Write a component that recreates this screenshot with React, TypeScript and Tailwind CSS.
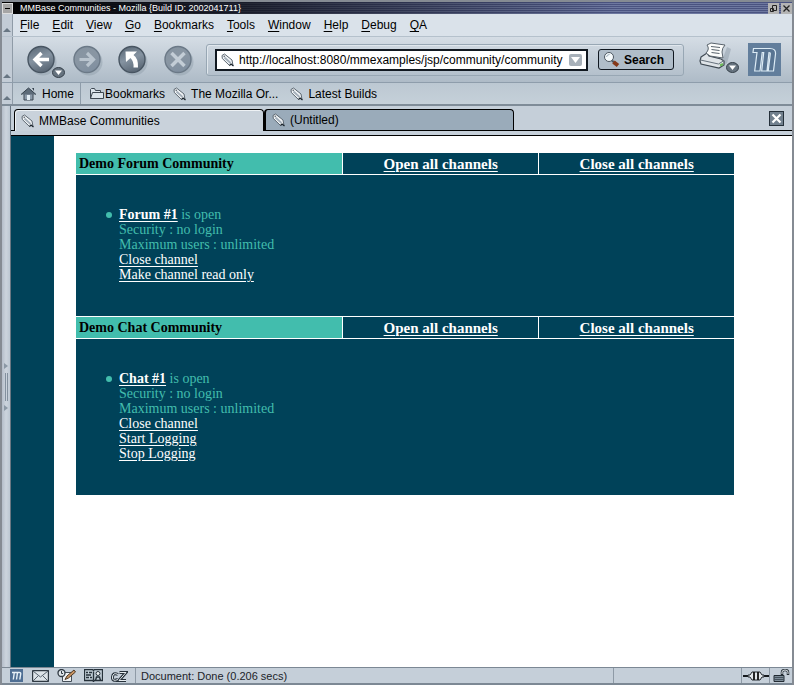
import React from "react";

type IconProps = { className?: string };

const Bookmark = ({ className = "" }: IconProps) => (
  <svg className={"shrink-0 " + className} width="14" height="14" viewBox="0 0 14 14">
    <path d="M1 2.500 3.500 1 11 7l1 5.500-2-1.500-1.500 1.500L1.300 5.500Z" fill="#f2f5f7" stroke="#5b6670" />
    <path d="M3.500 4.500 9.500 10" stroke="#a3aeb9" strokeWidth="1.8" />
    <path d="m8.500 12.500 1.500-1.500 2.500 2" stroke="#1d262e" strokeWidth="1.2" fill="none" />
    <circle cx="3.200" cy="3.300" r=".7" fill="#38424c" />
  </svg>
);

const Chevron = ({ className = "" }: IconProps) => (
  <svg className={className} width="13" height="11" viewBox="0 0 13 11">
    <ellipse cx="6.500" cy="5.500" rx="6" ry="5" fill="#66737f" stroke="#343e48" />
    <path d="M3 3.500h7L6.500 8Z" fill="#fff" />
  </svg>
);

function RoundButton({ label, dim, children }: { label: string; dim?: boolean; children: React.ReactNode }) {
  return (
    <button aria-label={label} className="h-8 w-8 shrink-0">
      <svg width="32" height="32" viewBox="0 0 32 32">
        <defs>
          <linearGradient id={"ball-" + label} x1="0" y1="0" x2="0.4" y2="1">
            <stop offset="0" stopColor={dim ? "#8593a0" : "#566472"} />
            <stop offset="0.55" stopColor={dim ? "#8996a3" : "#8593a1"} />
            <stop offset="1" stopColor={dim ? "#8190a0" : "#5e6b79"} />
          </linearGradient>
        </defs>
        <circle cx="18" cy="18" r="13.500" fill="#8a98a5" opacity=".4" />
        <circle cx="16" cy="15.500" r="13" fill={"url(#ball-" + label + ")"} stroke={dim ? "#6b7987" : "#485562"} strokeWidth="1.4" />
        {children}
      </svg>
    </button>
  );
}

const Gripper = () => (
  <div className="flex w-[11px] shrink-0 items-end justify-center border-r border-[#8f9ba7] bg-[#c3ccd6] pb-1">
    <svg width="8" height="4" viewBox="0 0 8 4">
      <path d="M4 0 8 4H0Z" fill="#687683" />
    </svg>
  </div>
);

function MozillaM() {
  return (
    <svg width="33" height="33" viewBox="0 0 33 33">
      <rect width="33" height="33" fill="#627e9c" />
      <path
        d="M5.500 5.500H22q6 0 5.500 5.500l-2 17h-5.300l2.100-17q.2-1.500-1.300-1.500L19 28h-5.300l2-18.500h-1.500L12 28H6.700L9 9.500H5Z"
        fill="#587492"
        stroke="#dcebf5"
        strokeWidth="1.2"
      />
    </svg>
  );
}

const menus = ["File", "Edit", "View", "Go", "Bookmarks", "Tools", "Window", "Help", "Debug", "QA"];

function TitleBar() {
  return (
    <header className="flex h-[14px] items-center border-t-2 border-[#858b93] bg-[repeating-linear-gradient(to_bottom,#4a5380_0,#4a5380_1px,#6d78a0_1px,#6d78a0_2px)]">
      <div className="flex h-full flex-1 items-center bg-linear-to-r from-black via-black/70 via-30% to-transparent to-80%">
        <button aria-label="Window menu" className="flex h-[11px] w-[11px] items-center justify-center border border-[#ddd] bg-[#a6a6a6]">
          <span className="h-px w-[5px] bg-black" />
        </button>
        <h1 className="ml-[7px] text-[9px] leading-3 whitespace-nowrap text-white">
          MMBase Communities - Mozilla {"{"}Build ID: 2002041711{"}"}
        </h1>
      </div>
      <button aria-label="Restore" className="mr-[2px] h-[11px] w-[11px] bg-[#b4b4b4]">
        <svg width="11" height="11" viewBox="0 0 11 11" fill="none" stroke="#222"><path d="M4.500 2.500h4v5h-4zM2.500 5.500h3v3h-3z" /></svg>
      </button>
      <button aria-label="Close window" className="h-[11px] w-[11px] bg-[#b4b4b4]">
        <svg width="11" height="11" viewBox="0 0 11 11" stroke="#222" strokeWidth="1.3"><path d="m2.500 2.500 6 6m0-6-6 6" /></svg>
      </button>
    </header>
  );
}

function Toolbar() {
  return (
    <div className="flex h-[46px] border-b border-[#8e9dab] bg-linear-to-b from-[#d5dde5] to-[#aebbc7]">
      <Gripper />
      <div className="flex min-w-0 flex-1 items-center pr-[11px] pl-3">
        <div className="relative mr-[14px] flex">
          <RoundButton label="Back"><path d="M24 15.500H10.500m6-6.500-6.500 6.500 6.500 6.500" stroke="#fff" strokeWidth="3.400" fill="none" /></RoundButton>
          <button aria-label="Back history" className="absolute top-[23px] left-[27px]"><Chevron /></button>
        </div>
        <div className="mr-[13px] flex"><RoundButton label="Forward" dim><path d="M8.500 15.500H22m-6-6.500 6.500 6.500-6.500 6.500" stroke="#b9c4ce" strokeWidth="3.200" fill="none" /></RoundButton></div>
        <div className="mr-[14px] flex"><RoundButton label="Reload"><path d="M9.500 7.500H21L17.500 11q5 3.500 4.500 12.500h-4.500q.5-6-3-9.500L10 18Z" fill="#fff" /></RoundButton></div>
        <RoundButton label="Stop" dim><path d="m9.500 9 13 13m0-13-13 13" stroke="#c3cdd6" strokeWidth="3.500" /></RoundButton>
        <div className="ml-3 flex h-8 min-w-0 flex-1 items-center rounded-[3px] border border-[#98a7b4] pr-[9px] pl-2 shadow-[inset_1px_1px_0_#e0e7ed]">
          <div className="flex h-[22px] min-w-0 flex-1 items-center border-2 border-[#111820] bg-white px-1">
            <Bookmark className="mr-1" />
            <input aria-label="Location" className="min-w-0 flex-1 text-xs outline-none" defaultValue="http://localhost:8080/mmexamples/jsp/community/community" />
            <button aria-label="Location history" className="flex h-3 w-[13px] shrink-0 items-center justify-center rounded-[2px] bg-[#a7b0b9]">
              <svg width="9" height="6" viewBox="0 0 9 6"><path d="M0 0h9L4.500 6Z" fill="#fff" /></svg>
            </button>
          </div>
          <button className="ml-[10px] flex h-[21px] w-[76px] items-center rounded-[3px] border border-[#111820] bg-[#b0bdc9] pl-1 text-xs font-bold">
            <svg className="mr-1" width="17" height="17" viewBox="0 0 17 17">
              <path d="m9 9.500 2 2" stroke="#4b5660" strokeWidth="2" />
              <path d="m10.500 11 4.500 3.500" stroke="#853819" strokeWidth="4" />
              <circle cx="6" cy="6" r="4.500" fill="#f5fafc" stroke="#4b5660" />
              <path d="M3.500 6Q4 3.500 6.500 3.500" stroke="#9cacb9" fill="none" />
            </svg>
            Search
          </button>
        </div>
        <button aria-label="Print" className="relative ml-[15px] h-9 w-[42px] shrink-0">
          <svg width="42" height="36" viewBox="0 0 42 36">
            <path d="m8 21 15-2 5-14 4 2-4 14-7 4Z" fill="#8997a4" opacity=".45" />
            <path d="m2 15 6-4 2 3 12 3 3 2v4l-5 3-18-4-1-3Z" fill="#dfe4e8" stroke="#3f4952" strokeWidth="1.200" />
            <path d="m8 3 4-2 14 2q-3 3-3 7l1 6-13-2-4-3q4-4 1-8Z" fill="#fbfcfb" stroke="#59636c" />
            <path d="m12 4.500 9 1m-8.500 2 8 1m-8 2 8 1" stroke="#59636c" />
            <path d="m1.500 18 18 4 5.500-3.500" stroke="#67727d" fill="none" />
            <path d="m21 23.500 3-1.500" stroke="#69b856" strokeWidth="2" />
          </svg>
          <span className="absolute right-[2px] bottom-[5px]"><Chevron /></span>
        </button>
        <a href="#" aria-label="Mozilla" className="ml-[7px] shrink-0"><MozillaM /></a>
      </div>
    </div>
  );
}

function PersonalBar() {
  return (
    <nav aria-label="Personal toolbar" className="flex h-[23px] border-b-2 border-[#7f8c98] bg-linear-to-b from-[#bcc8d2] to-[#c5d0d9]">
      <Gripper />
      <div className="flex items-center pl-2">
        <a href="#" className="flex h-full items-center border-r border-[#8e9ca9] pr-[6px]">
          <svg className="mr-[6px]" width="15" height="14" viewBox="0 0 15 14">
            <path d="M3 7v6h9V7" fill="#8c9baa" stroke="#3c4752" />
            <path d="M0 7.500 7.500 1 15 7.500" fill="#5d6b79" stroke="#34404b" />
            <path d="M11 1h2v3" fill="#34404b" />
            <path d="M6 8h3v5H6Z" fill="#e3edf5" />
          </svg>
          Home
        </a>
        <a href="#" className="ml-2 flex items-center">
          <svg className="mr-px" width="15" height="13" viewBox="0 0 15 13">
            <path d="M1.500 11.500v-9l1-1h3l1 2h5v2m-10 6 2-6h11v6Z" fill="#dbe4eb" stroke="#3d4751" />
          </svg>
          Bookmarks
        </a>
        <a href="#" className="ml-2 flex items-center"><Bookmark className="mr-1" />The Mozilla Or...</a>
        <a href="#" className="ml-3 flex items-center"><Bookmark className="mr-1" />Latest Builds</a>
      </div>
    </nav>
  );
}

function CommunityHead({ name }: { name: string }) {
  return (
    <tr className="h-[22px] leading-5">
      <th className="w-[267px] border-r border-b border-white bg-[#42bdad] px-[3px] text-left text-black">{name}</th>
      <th className="border-r border-b border-white text-center text-[15px]"><a href="#" className="underline underline-offset-2">Open all channels</a></th>
      <th className="border-b border-white text-center text-[15px]"><a href="#" className="underline underline-offset-2">Close all channels</a></th>
    </tr>
  );
}

function Channel({ name, actions, divider }: { name: string; actions: string[]; divider?: boolean }) {
  return (
    <tr>
      <td colSpan={3} className={"pt-8 pb-[34px] pl-[30px] " + (divider ? "border-b border-white" : "")}>
        <div className="flex items-start text-[#42bdad]">
          <span className="mt-[5px] mr-[7px] h-[6px] w-[6px] rounded-full bg-[#42bdad]" />
          <ul className="leading-[15px]">
            <li><a href="#" className="font-bold text-white underline underline-offset-2">{name}</a> is open</li>
            <li>Security : no login</li>
            <li>Maximum users : unlimited</li>
            {actions.map((a) => (
              <li key={a}><a href="#" className="text-white underline underline-offset-2">{a}</a></li>
            ))}
          </ul>
        </div>
      </td>
    </tr>
  );
}

function StatusBar() {
  return (
    <footer className="flex h-[18px] items-center border-t border-b-2 border-t-[#7c8894] border-b-[#7c8894] bg-[#c5cfd9] text-[11px] text-[#1c2329]">
      <div className="flex h-full w-[134px] shrink-0 items-center border-r border-[#8e9aa6] pl-2">
        <button aria-label="Navigator" className="mr-[9px]">
          <svg width="13" height="13" viewBox="0 0 13 13"><rect width="13" height="13" fill="#4f6f94" /><path d="M2 3.500h7.500q1.500 0 1.200 1.500L9.800 10.500M4.300 3.500 3.300 10.500M7.500 3.500l-1 7" stroke="#e6f0f7" strokeWidth="1.400" fill="none" /></svg>
        </button>
        <button aria-label="Mail" className="mr-2">
          <svg width="17" height="12" viewBox="0 0 17 12"><rect x=".5" y=".5" width="16" height="11" rx="1" fill="#dce3e8" stroke="#2f3942" strokeWidth="1.400" /><path d="m1 1 7.500 6L16 1M1 11l5-5m10 5-5-5" stroke="#55616c" fill="none" /></svg>
        </button>
        <button aria-label="Composer" className="mr-2">
          <svg width="19" height="14" viewBox="0 0 19 14"><path d="M5.500 3.500h9v9h-9Z" fill="#eef1f3" stroke="#444e58" /><circle cx="4.500" cy="4" r="3.500" fill="#dfe6eb" stroke="#303942" strokeWidth="1.300" /><path d="M4.500 2v2.500H6" stroke="#303942" fill="none" /><path d="M8 10.500 10 7l7-6 1.500 2-7 6Z" fill="#c99462" stroke="#4f3a28" /></svg>
        </button>
        <button aria-label="Address book" className="mr-2">
          <svg width="19" height="13" viewBox="0 0 19 13"><path d="M.5.500h8l1 1 1-1h8v11h-8l-1 1-1-1h-8Z" fill="#c2ced7" stroke="#26313a" strokeWidth="1.300" /><path d="M2 3.500h2m1 0h3M2 6h5M2 8.500h3m1 0h2m1.500-6v9m2 0 1-3.500h3l1 3.500" stroke="#26313a" strokeWidth="1.400" fill="none" /><circle cx="14" cy="4.500" r="2" fill="#f0f4f6" stroke="#26313a" /></svg>
        </button>
        <button aria-label="ChatZilla" className="text-[#26313a]">
          <svg width="17" height="12" viewBox="0 0 17 12" fill="none" stroke="currentColor"><path d="M7 4.500Q2 2 1.500 7T7 9.500M8.500 2.500H15L8 10.500h7" strokeWidth="3" /><path d="M7 4.500Q2 2 1.500 7T7 9.500M8.500 2.500H15L8 10.500h7" stroke="#e5ebef" /></svg>
        </button>
      </div>
      <p className="h-full flex-1 border-r border-[#8e9aa6] pl-[5px] leading-[17px]">Document: Done (0.206 secs)</p>
      <div className="h-full w-32 border-r border-[#8e9aa6]" />
      <div className="flex h-full w-7 items-center justify-center border-r border-[#8e9aa6]">
        <svg width="26" height="10" viewBox="0 0 26 10"><path d="M0 5h7m12 0h7" stroke="#15191d" strokeWidth="2" /><path d="M5 4h2l2-3h8l2 3h2v2h-2l-2 3H9L7 6H5Z" fill="#e3e8ec" stroke="#22282e" /><path d="M11 1v8m4-8v8" stroke="#111" strokeWidth="1.800" /></svg>
      </div>
      <div className="flex h-full w-[22px] items-center justify-center">
        <svg width="17" height="13" viewBox="0 0 17 13"><path d="M1 6.500h10v6H1Z" fill="#7e8d99" stroke="#222b33" /><path d="M1 8.500h10m-10 2h10" stroke="#46525d" /><path d="M9 6V3q0-2 3-2t3 2v3" fill="none" stroke="#222b33" strokeWidth="2.500" /><path d="M9 5V3q0-2 3-2t3 2v2" fill="none" stroke="#e4e9ed" strokeWidth="1" /></svg>
      </div>
    </footer>
  );
}

export default function App() {
  return (
    <div className="flex min-h-screen flex-col border-r-2 border-l-2 border-[#858b93] bg-[#c5cfd9] font-['Liberation_Sans',Arial,sans-serif] text-xs text-black">
      <TitleBar />
      <div className="flex h-[23px] border-b border-[#b5c1cc] bg-[#dae2ea]">
        <Gripper />
        <nav aria-label="Menu bar" className="flex items-center gap-[13px] pl-[7px]">
          {menus.map((m) => (
            <button key={m}><span className="underline underline-offset-2">{m[0]}</span>{m.slice(1)}</button>
          ))}
        </nav>
      </div>
      <Toolbar />
      <PersonalBar />
      <div className="flex flex-1">
        <div className="flex w-[9px] shrink-0 flex-col items-center justify-center gap-1 border-r border-[#697682] bg-linear-to-r from-[#b4bdc9] via-[#ccd4dd] to-[#bcc7d2]">
          <svg width="4" height="6" viewBox="0 0 4 6"><path d="M0 0 4 3 0 6Z" fill="#8b98a5" /></svg>
          <span className="h-7 w-[3px] border-x border-[#82909e]" />
          <svg width="4" height="6" viewBox="0 0 4 6"><path d="M0 0 4 3 0 6Z" fill="#8b98a5" /></svg>
        </div>
        <div className="flex min-w-0 flex-1 flex-col">
          <div className="flex h-[30px] flex-col border-b border-black bg-[#c5cfd9]">
            <div className="flex h-[25px] items-end border-b border-black pl-[3px]">
              <div role="tablist" className="flex flex-1 items-end">
                <button role="tab" aria-selected="true" className="-mb-px flex h-[22px] w-[250px] items-center rounded-t-[4px] border border-b-0 border-black bg-[#c9d2db] pl-[6px] shadow-[inset_1px_1px_0_#eef2f5]"><Bookmark className="mr-1" />MMBase Communities</button>
                <button role="tab" aria-selected="false" className="flex h-[21px] w-[250px] items-center rounded-t-[4px] border border-b-0 border-l-2 border-black bg-[#9aabba] pl-[6px]"><Bookmark className="mr-1" />(Untitled)</button>
              </div>
              <button aria-label="Close tab" className="mr-2 mb-1 flex h-[15px] w-[15px] items-center justify-center border border-[#25303a] bg-[#71808e]">
                <svg width="11" height="11" viewBox="0 0 11 11" stroke="#fff" strokeWidth="2.200"><path d="m1.500 1.500 8 8m0-8-8 8" /></svg>
              </button>
            </div>
          </div>
          <main className="flex flex-1 bg-white font-['Liberation_Serif','Times_New_Roman',serif] text-sm">
            <div className="w-[43px] shrink-0 bg-[#004259]" />
            <div className="flex-1 pt-[17px] pr-[58px] pb-6 pl-[22px]">
              <table className="w-full border-separate border-spacing-0 bg-[#004259] text-white">
                <tbody>
                  <CommunityHead name="Demo Forum Community" />
                  <Channel name="Forum #1" actions={["Close channel", "Make channel read only"]} divider />
                  <CommunityHead name="Demo Chat Community" />
                  <Channel name="Chat #1" actions={["Close channel", "Start Logging", "Stop Logging"]} />
                </tbody>
              </table>
            </div>
          </main>
        </div>
      </div>
      <StatusBar />
    </div>
  );
}
